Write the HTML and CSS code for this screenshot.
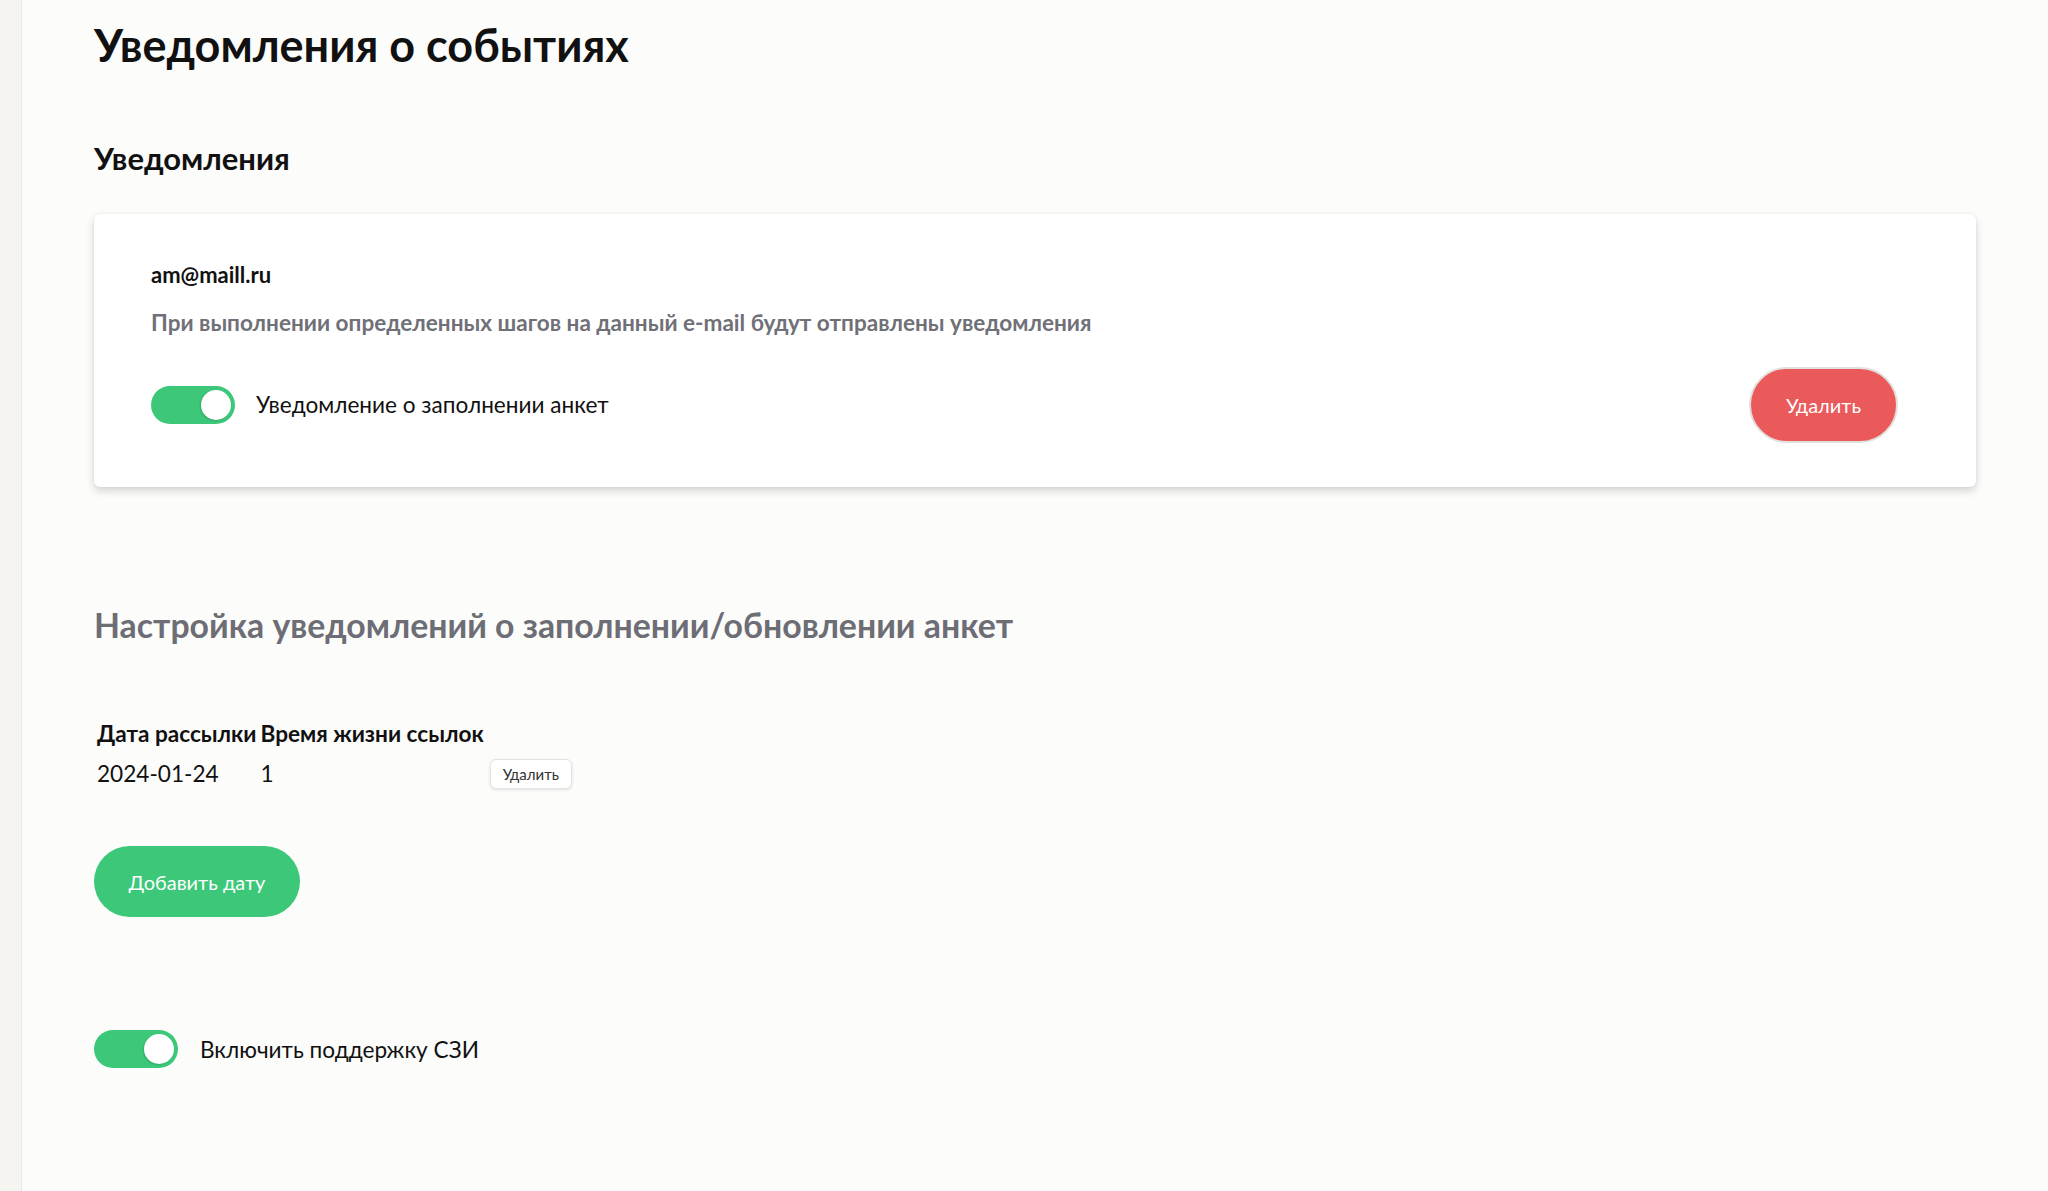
FILE: index.html
```
<!DOCTYPE html>
<html lang="ru">
<head>
	<meta charset="UTF-8">
	<title>Уведомления о событиях</title>
	<link rel="stylesheet" href="styles.css">
</head>
<body>
	<div class="layout">
		<aside class="side"></aside>
		<main class="content">
			<h1 class="page-title">Уведомления о событиях</h1>

			<h2 class="block-title">Уведомления</h2>
			<div class="mail-card">
				<div class="mail-card__email">am@maill.ru</div>
				<p class="mail-card__desc">При выполнении определенных шагов на данный e-mail будут отправлены уведомления</p>
				<div class="mail-card__row">
					<label class="switch-row">
						<span class="switch on"><span class="switch__knob"></span></span>
						<span class="switch-row__text">Уведомление о заполнении анкет</span>
					</label>
					<button class="btn-red" type="button">Удалить</button>
				</div>
			</div>

			<h2 class="section-title">Настройка уведомлений о заполнении/обновлении анкет</h2>
			<table class="dates">
				<tr>
					<th>Дата рассылки</th>
					<th>Время жизни ссылок</th>
					<th></th>
				</tr>
				<tr>
					<td>2024-01-24</td>
					<td>1</td>
					<td><button class="btn-small" type="button">Удалить</button></td>
				</tr>
			</table>
			<button class="btn-green" type="button">Добавить дату</button>

			<label class="switch-row switch-row--szi">
				<span class="switch on"><span class="switch__knob"></span></span>
				<span class="switch-row__text">Включить поддержку СЗИ</span>
			</label>
		</main>
	</div>
</body>
</html>
```

FILE: styles.css
```
*{
	margin: 0;
	padding: 0;
	box-sizing: border-box;
}
body{
	background: #fcfcfb;
	font-family: Lato, "Noto Sans", sans-serif;
	color: #111;
	line-height: 1.2;
}
button{
	font-family: inherit;
	cursor: pointer;
}
.layout{
	display: flex;
	min-height: 1191px;
}
.side{
	width: 22px;
	flex: none;
	background: #f5f4f1;
	border-right: 1px solid #ebe9e5;
}
.content{
	flex: 1;
	padding: 0 72px 0 72px;
}
/*заголовки*/
.page-title{
	font-size: 45px;
	font-weight: 700;
	margin-top: 18px;
}
.block-title{
	font-size: 31px;
	font-weight: 700;
	margin-top: 68px;
}
.section-title{
	font-size: 33.8px;
	font-weight: 700;
	color: #6d6d75;
	margin-top: 118px;
}
/*карточка e-mail*/
.mail-card{
	margin-top: 37px;
	background: #fff;
	border-radius: 6px;
	box-shadow: 0 4px 8px rgba(0,0,0,0.16), 0 0 2px rgba(0,0,0,0.08);
	padding: 48px 78px 44px 57px;
}
.mail-card__email{
	font-size: 22px;
	font-weight: 700;
}
.mail-card__desc{
	margin-top: 20px;
	font-size: 22.55px;
	font-weight: 700;
	color: #707078;
}
.mail-card__row{
	margin-top: 31px;
	display: flex;
	align-items: center;
	justify-content: space-between;
}
/*переключатель*/
.switch-row{
	display: flex;
	align-items: center;
	gap: 21px;
	font-size: 22.6px;
}
.switch{
	display: block;
	width: 84px;
	height: 38px;
	border-radius: 19px;
	background: #3cc878;
	position: relative;
}
.switch__knob{
	position: absolute;
	top: 4px;
	right: 4px;
	width: 30px;
	height: 30px;
	border-radius: 50%;
	background: #fff;
	box-shadow: -1px 1px 2px rgba(0,0,0,0.15);
}
.switch-row--szi{
	margin-top: 113px;
	gap: 22px;
}
/*кнопки*/
.btn-red{
	width: 149px;
	height: 76px;
	border: 2px solid #e2e0dd;
	border-radius: 38px;
	background: #eb5a5a;
	color: #fff;
	font-size: 20px;
}
.btn-green{
	display: block;
	margin-top: 53px;
	width: 206px;
	height: 71px;
	border: none;
	border-radius: 36px;
	background: #3cc878;
	color: #fff;
	font-size: 20px;
}
.btn-small{
	height: 30px;
	padding: 0 12px;
	border: 1px solid #e6e4e1;
	border-radius: 6px;
	background: #fff;
	color: #333;
	font-size: 15px;
	box-shadow: 0 1px 3px rgba(0,0,0,0.12);
	margin-left: 2px;
}
/*таблица дат*/
.dates{
	margin-top: 72px;
	font-size: 22.6px;
}
.dates th{
	font-weight: 700;
	padding: 1px;
}
.dates td{
	padding: 8px 1px 2px;
}
```
